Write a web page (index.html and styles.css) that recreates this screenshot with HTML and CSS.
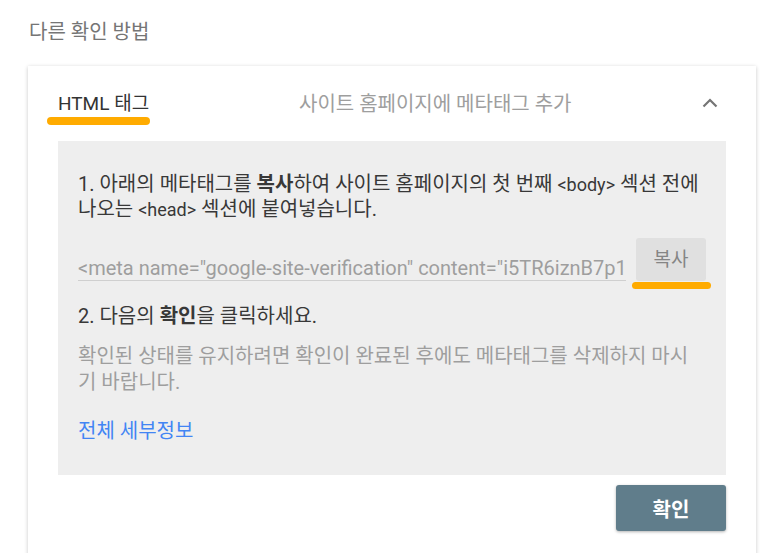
FILE: index.html
```html
<!DOCTYPE html>
<html>
    <head>
        <meta charset="UTF-8">
        <meta name="viewport" content="width=device-width, initial-scale=1.0">
        <title>다른 확인 방법</title>
        <link rel="stylesheet" href="styles.css">
    </head>
    <body>
        <div class="page">
            <h2 class="section-title">다른 확인 방법</h2>

            <div class="card">
                <div class="card-header">
                    <span class="method-name marked">HTML 태그</span>
                    <span class="method-desc">사이트 홈페이지에 메타태그 추가</span>
                    <svg class="chevron" width="18" height="12" viewBox="0 0 18 12">
                        <path d="M2.5 9.5 L9 3 L15.5 9.5" fill="none" stroke="#757575" stroke-width="2.2"/>
                    </svg>
                </div>

                <div class="panel">
                    <p class="step">1. 아래의 메타태그를 <b>복사</b>하여 사이트 홈페이지의 첫 번째 <span class="code">&lt;body&gt;</span> 섹션 전에 나오는 <span class="code">&lt;head&gt;</span> 섹션에 붙여넣습니다.</p>

                    <div class="copy-row">
                        <div class="meta-field">&lt;meta name="google-site-verification" content="i5TR6iznB7p1</div>
                        <button class="copy-button marked">복사</button>
                    </div>

                    <p class="step step-two">2. 다음의 <b>확인</b>을 클릭하세요.</p>
                    <p class="note">확인된 상태를 유지하려면 확인이 완료된 후에도 메타태그를 삭제하지 마시기 바랍니다.</p>
                    <a class="details" href="#">전체 세부정보</a>
                </div>

                <div class="actions">
                    <button class="verify-button">확인</button>
                </div>
            </div>
        </div>
    </body>
</html>
```

FILE: styles.css
```css
body {
    margin: 0;
    background-color: #ffffff;
    font-family: Roboto, "Noto Sans CJK KR", sans-serif;
    color: #333333;
}

.page {
    padding: 20px 0 0 28px;
}

.section-title {
    margin: 0 0 22px 1px;
    font-size: 20px;
    font-weight: normal;
    color: #757575;
    line-height: 24px;
}

.card {
    width: 728px;
    height: 490px;
    background-color: #ffffff;
    box-shadow: 0 1px 4px rgba(0, 0, 0, 0.22);
}

.card-header {
    display: flex;
    align-items: center;
    height: 75px;
    padding: 0 37px 0 30px;
}

.method-name {
    font-size: 19px;
    line-height: 24px;
    color: #333333;
    width: 241px;
}

.method-desc {
    flex: 1;
    font-size: 20px;
    line-height: 24px;
    color: #9e9e9e;
}

.chevron {
    position: relative;
    top: -1px;
}

/* orange highlight strokes drawn over the screenshot */
.marked {
    position: relative;
}

.method-name.marked::after {
    content: "";
    position: absolute;
    left: -11px;
    width: 103px;
    top: 25px;
    height: 8px;
    border-radius: 4px;
    background-color: #ffab00;
}

.panel {
    margin: 0 30px;
    padding: 31px 23px 0 20px;
    background-color: #eeeeee;
    height: 303px;
}

.step {
    margin: 0;
    font-size: 20px;
    line-height: 25px;
    color: #383838;
}

.step b {
    font-weight: bold;
}

.code {
    font-size: 18px;
}

.copy-row {
    display: flex;
    align-items: flex-end;
    margin: 16px 0 0 0;
}

.meta-field {
    flex: none;
    width: 548px;
    font-size: 20px;
    line-height: 24px;
    color: #9e9e9e;
    border-bottom: 1px solid #cfcfcf;
    white-space: nowrap;
    overflow: hidden;
}

.copy-button {
    flex: none;
    margin-left: 10px;
    width: 70px;
    height: 43px;
    border: none;
    border-radius: 3px;
    background-color: #e0e0e0;
    color: #858585;
    font-family: inherit;
    font-size: 19px;
    padding: 0 0 4px 0;
}

.copy-button.marked::after {
    content: "";
    position: absolute;
    left: -4px;
    width: 79px;
    bottom: -8px;
    height: 7px;
    border-radius: 4px;
    background-color: #ffab00;
}

.step-two {
    margin-top: 23px;
}

.note {
    margin: 14px 0 0 0;
    font-size: 20px;
    line-height: 26px;
    color: #9e9e9e;
    word-break: break-all;
}

.details {
    display: inline-block;
    margin-top: 24px;
    font-size: 20px;
    line-height: 25px;
    color: #4285f4;
    text-decoration: none;
}

.actions {
    display: flex;
    justify-content: flex-end;
    padding: 10px 30px 0 0;
}

.verify-button {
    width: 110px;
    height: 46px;
    border: none;
    border-radius: 3px;
    background-color: #607d8b;
    color: #ffffff;
    font-family: inherit;
    font-size: 20px;
    font-weight: bold;
    box-shadow: 0 1px 3px rgba(0, 0, 0, 0.3);
}
```
